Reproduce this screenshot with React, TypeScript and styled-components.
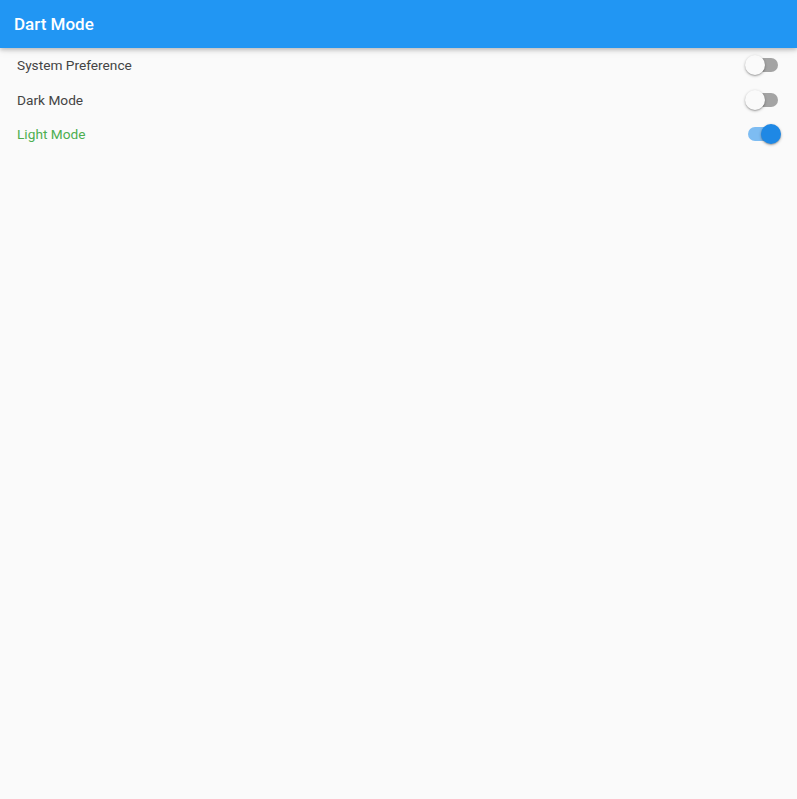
import React from "react";
import styled, { createGlobalStyle } from "styled-components";

const Global = createGlobalStyle`
  html, body { margin: 0; padding: 0; background: #fafafa; }
  body { font-family: Roboto, "Noto Sans", sans-serif; }
`;

const Page = styled.div`
  width: 797px;
  height: 799px;
  background: #fafafa;
  display: flex;
  flex-direction: column;
`;

const AppBar = styled.header`
  height: 48px;
  background: #2196f3;
  display: flex;
  align-items: center;
  padding-left: 14px;
  box-shadow: 0 2px 4px rgba(0, 0, 0, 0.2), 0 1px 10px rgba(0, 0, 0, 0.1);
  position: relative;
  z-index: 1;
`;

const Title = styled.h1`
  margin: 0;
  color: #ffffff;
  font-size: 17px;
  font-weight: 500;
`;

const List = styled.div`
  display: flex;
  flex-direction: column;
`;

const Row = styled.div`
  height: 34.5px;
  display: flex;
  align-items: center;
  justify-content: space-between;
  padding: 0 19px 0 17px;
`;

const Label = styled.span<{ $active: boolean }>`
  font-size: 13.7px;
  color: ${(p) => (p.$active ? "#4caf50" : "#444444")};
`;

const Track = styled.div<{ $on: boolean }>`
  position: relative;
  width: 30px;
  height: 14px;
  border-radius: 7px;
  background: ${(p) => (p.$on ? "#7dbcf2" : "#a4a4a4")};
`;

const Thumb = styled.div<{ $on: boolean }>`
  position: absolute;
  top: -3px;
  left: ${(p) => (p.$on ? "13px" : "-3px")};
  width: 20px;
  height: 20px;
  border-radius: 50%;
  background: ${(p) => (p.$on ? "#1e88e5" : "#fafafa")};
  box-shadow: 0 1px 3px rgba(0, 0, 0, 0.3), 0 1px 1px rgba(0, 0, 0, 0.14);
`;

const items = [
  { label: "System Preference", on: false },
  { label: "Dark Mode", on: false },
  { label: "Light Mode", on: true },
];

export default function App() {
  return (
    <Page>
      <Global />
      <AppBar>
        <Title>Dart Mode</Title>
      </AppBar>
      <List>
        {items.map((it) => (
          <Row key={it.label}>
            <Label $active={it.on}>{it.label}</Label>
            <Track $on={it.on}>
              <Thumb $on={it.on} />
            </Track>
          </Row>
        ))}
      </List>
    </Page>
  );
}
